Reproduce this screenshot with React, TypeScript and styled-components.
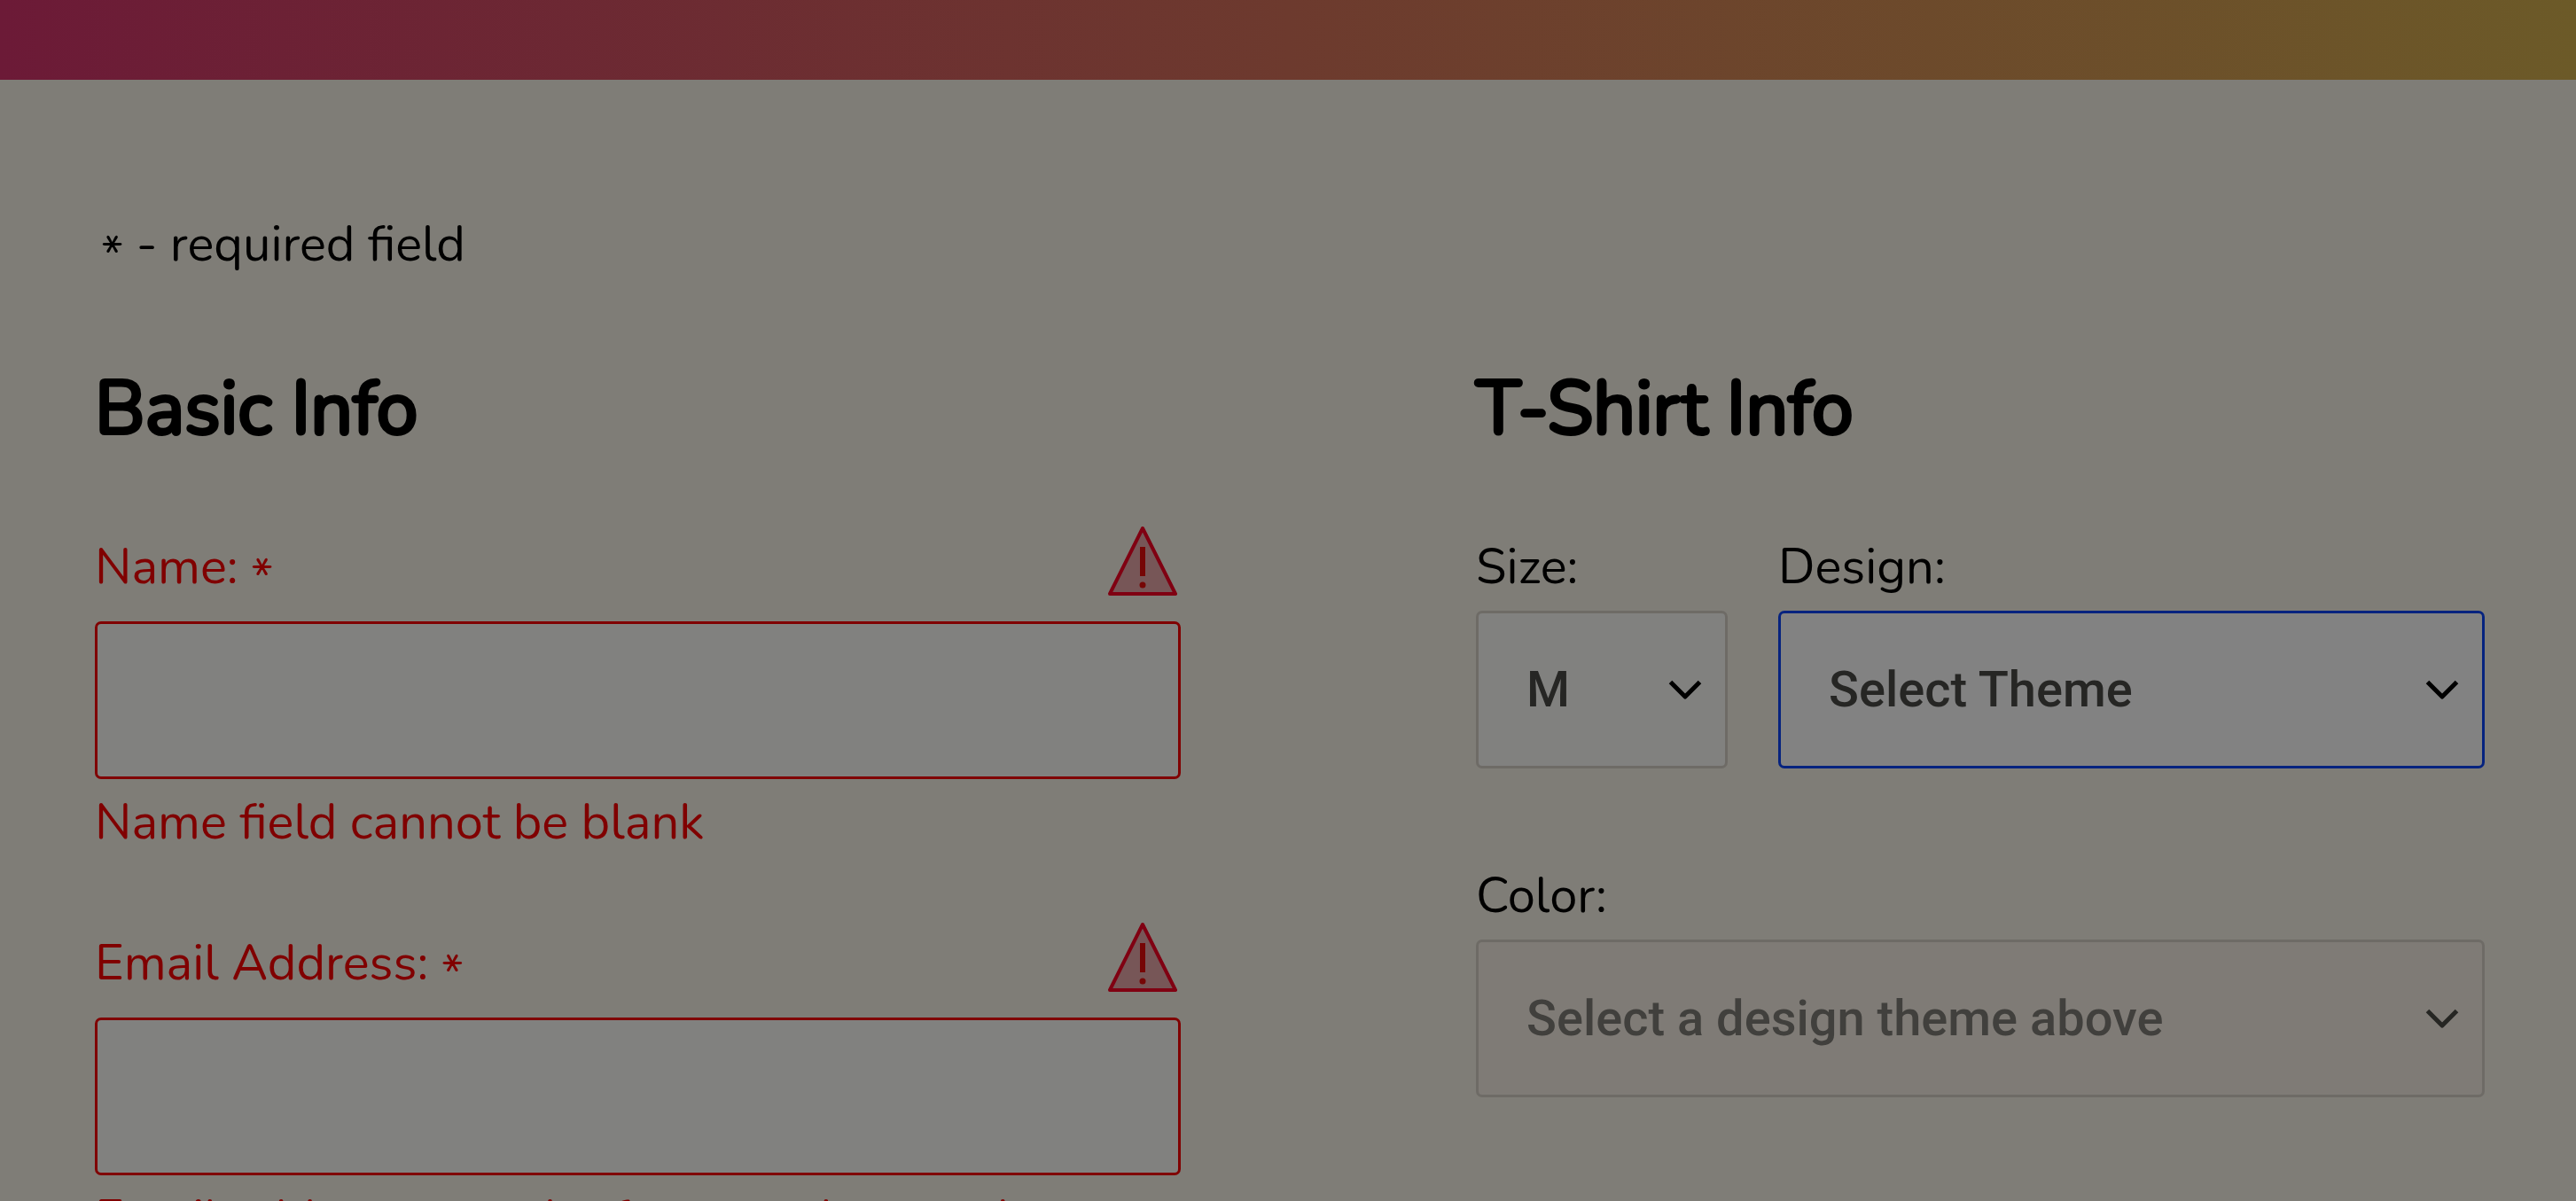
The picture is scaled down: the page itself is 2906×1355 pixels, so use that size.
import React from "react";
import styled, { createGlobalStyle } from "styled-components";

const GlobalStyle = createGlobalStyle`
  *, *::before, *::after { box-sizing: border-box; }
  html { scrollbar-width: none; }
  body {
    margin: 0;
    background: #7f7d77;
    color: #000;
    font-family: Nunito, Lato, sans-serif;
    font-size: 56px;
    line-height: 76px;
  }
`;

const Banner = styled.header`
  height: 90px;
  background: linear-gradient(90deg, #6c1a37 0%, #6d3a2e 50%, #6c5a28 100%);
`;

const Form = styled.form`
  padding: 148px 103px 80px 107px;
`;

const Note = styled.p`
  margin: 0 0 88px;
  padding-left: 7px;
`;

const Star = styled.span`
  line-height: 1px;
  vertical-align: -12px;
`;

const Columns = styled.div`
  display: grid;
  grid-template-columns: 1225fr 1138fr;
  column-gap: 333px;
  align-items: start;
`;

const Section = styled.section<{ $gap: number }>`
  display: flex;
  flex-direction: column;
  gap: ${(p) => p.$gap}px;
`;

const Heading = styled.h2`
  margin: 0 0 80px;
  font-size: 84px;
  line-height: 120px;
  font-weight: 400;
  -webkit-text-stroke: 4px #000;
`;

const Field = styled.div`
  display: flex;
  flex-direction: column;
`;

const LabelRow = styled.div`
  display: flex;
  justify-content: space-between;
  align-items: flex-start;
  margin-bottom: 23px;
  padding-right: 3px;
  color: #800000;
`;

const TextBox = styled.input`
  width: 100%;
  height: 178px;
  padding: 0 56px;
  border: 3px solid #800000;
  border-radius: 7px;
  background: #81817f;
  color: #252522;
  font: 500 56px/76px Roboto, sans-serif;
  outline: none;
`;

const ErrorText = styled.p`
  margin: 11px 0 0;
  color: #800000;
`;

const SelectRow = styled.div`
  display: grid;
  grid-template-columns: 284fr 797fr;
  column-gap: 57px;
`;

const SelectLabel = styled.label`
  margin-bottom: 11px;
`;

const SelectShell = styled.div`
  position: relative;
  display: flex;
`;

const Select = styled.select<{ $active?: boolean }>`
  appearance: none;
  width: 100%;
  height: 178px;
  padding: 0 80px 0 54px;
  border: 3px solid ${(p) => (p.$active ? "#06237f" : "#6e6b66")};
  border-radius: 7px;
  background: ${(p) => (p.$active ? "#828282" : "#81817f")};
  color: #262624;
  font: 500 56px/76px Roboto, sans-serif;
  outline: none;
  opacity: 1;

  &:disabled {
    background: #7f7b76;
    color: #41403d;
  }
`;

const Arrow = styled.svg`
  position: absolute;
  right: 29px;
  top: 77px;
  width: 38px;
  height: 24px;
  pointer-events: none;
`;

const WarningSvg = styled.svg`
  width: 80px;
  height: 80px;
  margin-top: -9px;
  margin-bottom: -9px;
`;

const Warning = () => (
  <WarningSvg viewBox="0 0 80 80" aria-hidden="true">
    <path
      d="M40 3 L77 77 H3 Z"
      fill="#775657"
      stroke="#800012"
      strokeWidth="4"
      strokeLinejoin="round"
    />
    <path d="M40 24 V57" stroke="#760606" strokeWidth="6" />
    <circle cx="40" cy="67" r="3.5" fill="#760606" />
  </WarningSvg>
);

type TextFieldProps = { id: string; label: string; type: string; error: string };

const TextField = ({ id, label, type, error }: TextFieldProps) => (
  <Field>
    <LabelRow>
      <label htmlFor={id}>
        {label} <Star>*</Star>
      </label>
      <Warning />
    </LabelRow>
    <TextBox id={id} type={type} aria-invalid="true" aria-describedby={`${id}-error`} />
    <ErrorText id={`${id}-error`}>{error}</ErrorText>
  </Field>
);

type SelectFieldProps = {
  id: string;
  label: string;
  options: string[];
  value: string;
  active?: boolean;
  disabled?: boolean;
};

const SelectField = ({ id, label, options, value, active, disabled }: SelectFieldProps) => (
  <Field>
    <SelectLabel htmlFor={id}>{label}</SelectLabel>
    <SelectShell>
      <Select id={id} defaultValue={value} $active={active} disabled={disabled}>
        {options.map((o) => (
          <option key={o}>{o}</option>
        ))}
      </Select>
      <Arrow viewBox="0 0 38 24" aria-hidden="true">
        <path
          d="M2.5 3.5 L19 20 L35.5 3.5"
          fill="none"
          stroke={disabled ? "#262623" : "#000"}
          strokeWidth="5"
          strokeLinejoin="round"
        />
      </Arrow>
    </SelectShell>
  </Field>
);

export default function App() {
  return (
    <>
      <GlobalStyle />
      <Banner />
      <Form noValidate>
        <Note>
          <Star>*</Star> - required field
        </Note>
        <Columns>
          <Section $gap={83}>
            <div>
              <Heading>Basic Info</Heading>
              <TextField id="name" label="Name:" type="text" error="Name field cannot be blank" />
            </div>
            <TextField
              id="email"
              label="Email Address:"
              type="email"
              error="Email address must be formatted correctly"
            />
          </Section>
          <Section $gap={106}>
            <div>
              <Heading>T-Shirt Info</Heading>
              <SelectRow>
                <SelectField id="size" label="Size:" options={["S", "M", "L", "XL"]} value="M" />
                <SelectField
                  id="design"
                  label="Design:"
                  options={["Select Theme"]}
                  value="Select Theme"
                  active
                />
              </SelectRow>
            </div>
            <SelectField
              id="color"
              label="Color:"
              options={["Select a design theme above"]}
              value="Select a design theme above"
              disabled
            />
          </Section>
        </Columns>
      </Form>
    </>
  );
}
